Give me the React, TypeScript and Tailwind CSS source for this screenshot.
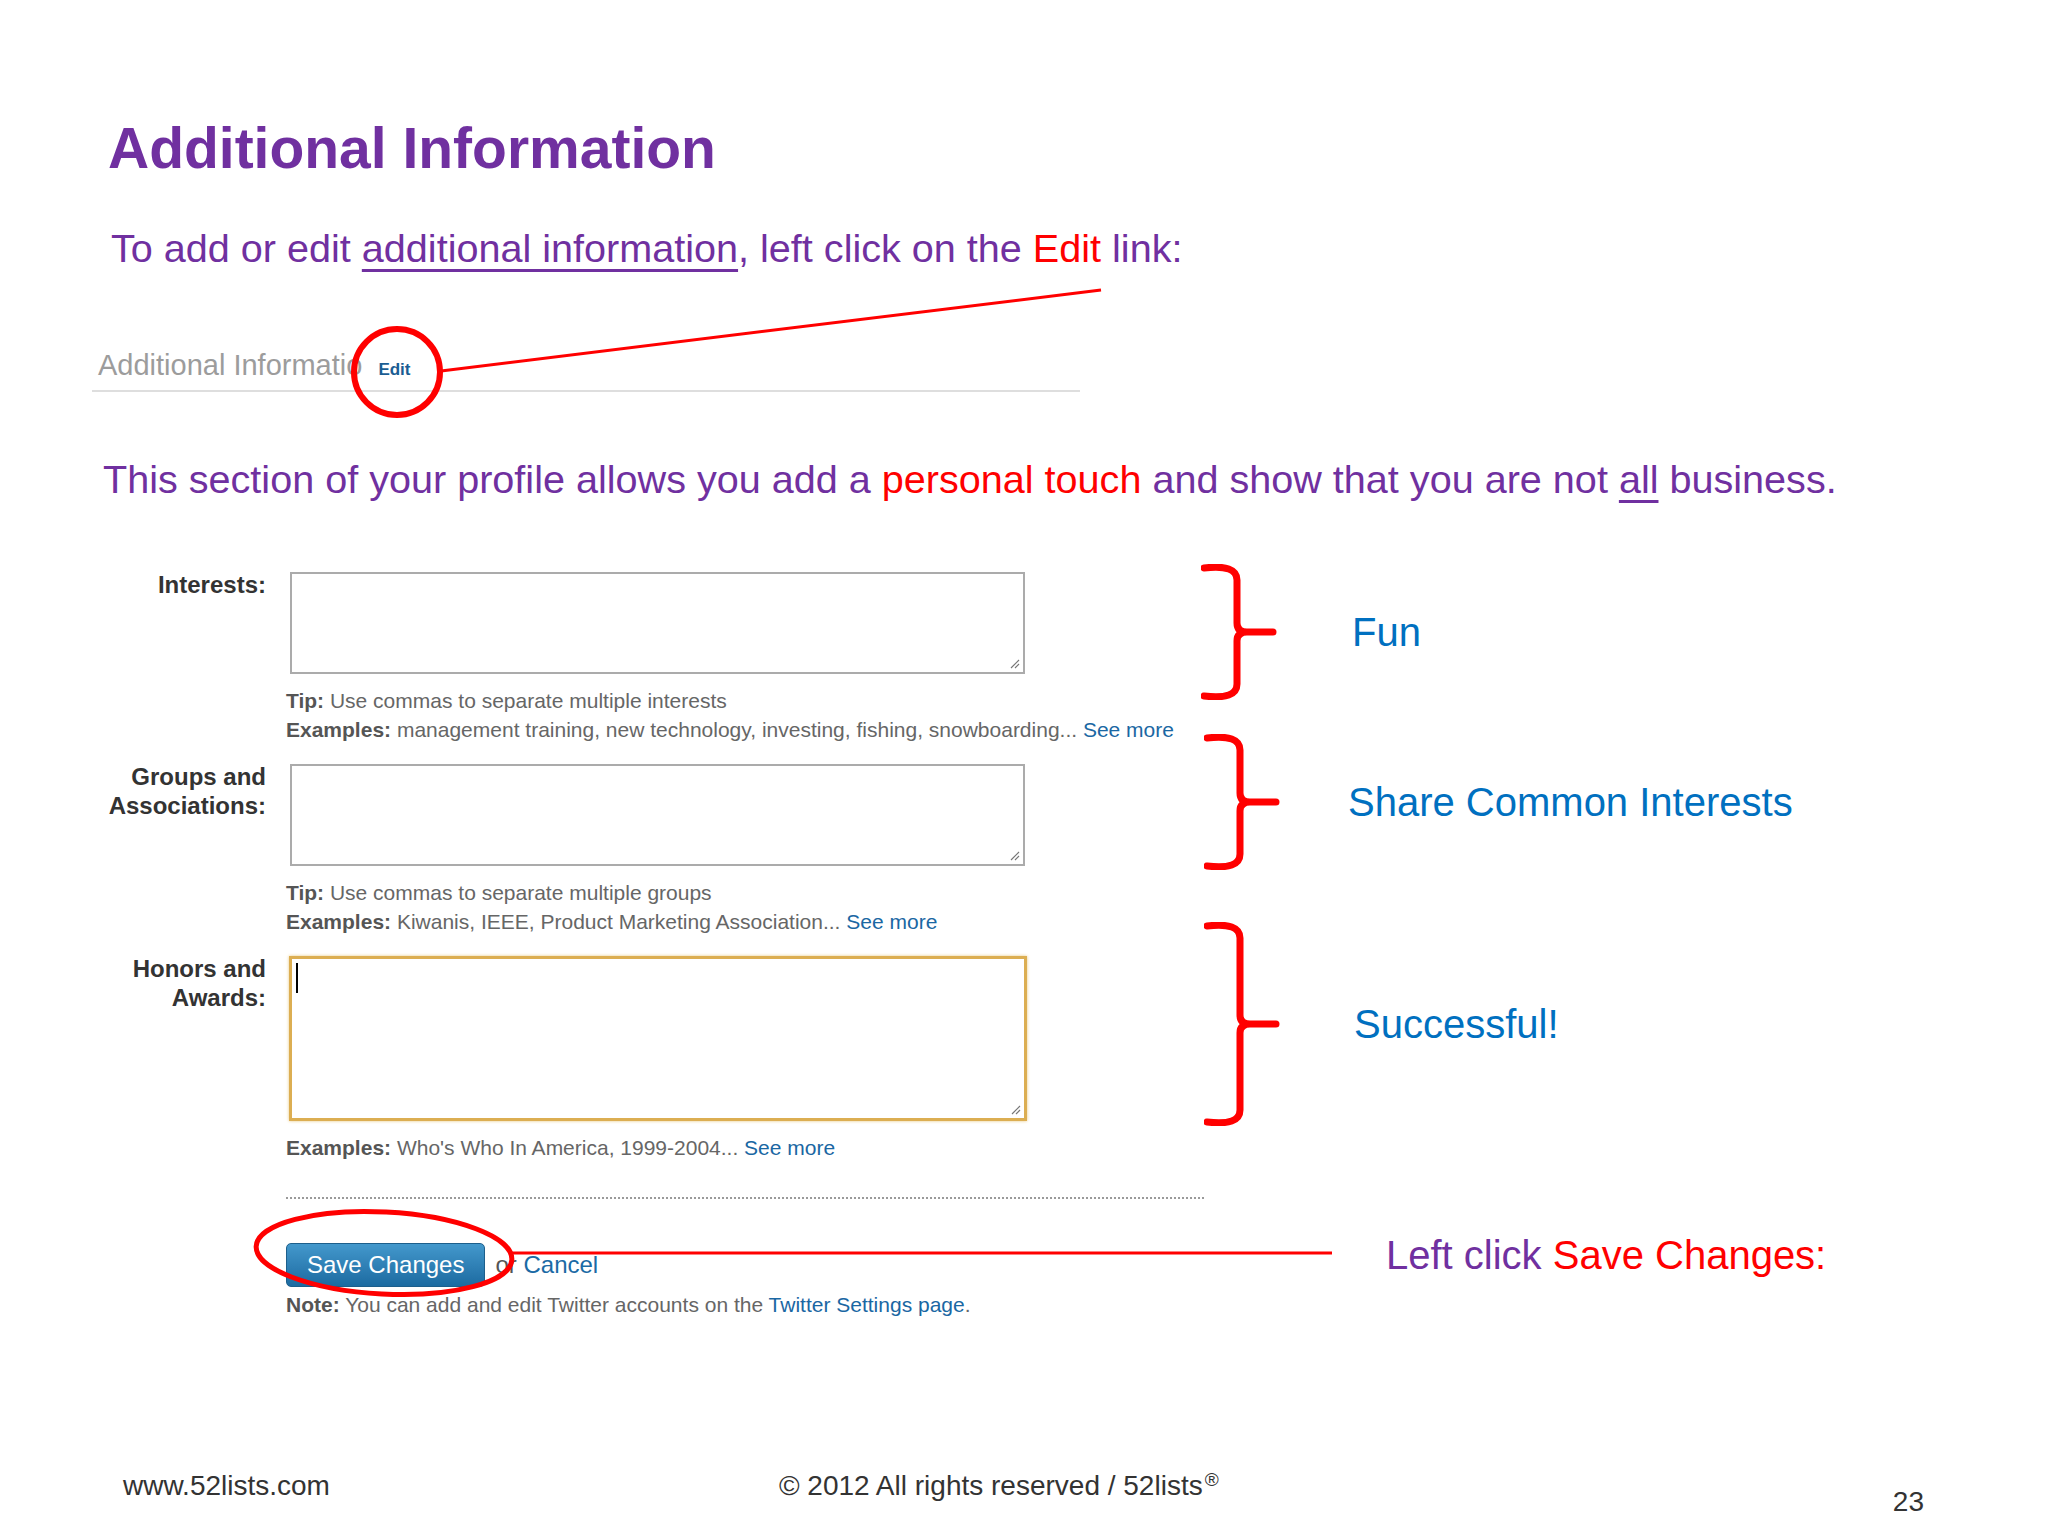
import React from 'react'

const font = { fontFamily: '"Liberation Sans", Arial, sans-serif' }

const Grip = () => (
  <svg className="absolute right-[3px] bottom-[3px]" width="11" height="11" viewBox="0 0 11 11">
    <path d="M10 2 L2 10 M10 6 L6 10" stroke="#777" strokeWidth="1.2" />
  </svg>
)

const Brace = ({ h }: { h: number }) => {
  const mid = h / 2
  return (
    <svg width="76" height={h} viewBox={`0 0 76 ${h}`} className="shrink-0">
      <path
        d={`M3 4 Q36 0 36 16 L36 ${mid - 9} Q36 ${mid} 46 ${mid} L72 ${mid} M46 ${mid} Q36 ${mid} 36 ${mid + 9} L36 ${h - 16} Q36 ${h} 3 ${h - 4}`}
        stroke="#ff0000"
        strokeWidth="7"
        fill="none"
        strokeLinecap="round"
        strokeLinejoin="round"
      />
    </svg>
  )
}

const Label = ({ lines }: { lines: string[] }) => (
  <div className="w-[266px] text-right text-[24px] leading-[29px] font-bold text-[#333]">
    {lines.map((l) => (
      <div key={l}>{l}</div>
    ))}
  </div>
)

const SeeMore = () => <span className="text-[#1a67a3]">See more</span>

const App = () => {
  return (
    <div className="relative w-[2048px] h-[1536px] bg-white flex flex-col overflow-hidden" style={font}>
      <h1 className="mt-[120px] ml-[108px] text-[57px] leading-[57px] font-bold text-[#7030a0]">
        Additional Information
      </h1>

      <p className="mt-[51px] ml-[111px] text-[39.6px] leading-[40px] text-[#7030a0]">
        To add or edit{' '}
        <span className="underline decoration-[3px] underline-offset-[7px]">additional information</span>, left click on
        the <span className="text-[#ff0000]">Edit</span> link:
      </p>

      <div className="mt-[83px] ml-[92px] w-[988px] pl-[6px] pb-[7px] border-b-2 border-[#dedede] flex items-baseline">
        <span className="text-[29px] leading-[29px] text-[#9c9c9c]">Additional Informatio</span>
        <span className="ml-[16px] text-[17px] font-bold text-[#1a5d93]">Edit</span>
      </div>

      <p className="mt-[67px] ml-[103px] text-[39.6px] leading-[40px] text-[#7030a0]">
        This section of your profile allows you add a <span className="text-[#ff0000]">personal touch</span> and show
        that you are not <span className="underline decoration-[3px] underline-offset-[7px]">all</span> business.
      </p>

      <div className="mt-[65px] flex">
        <div className="w-[1201px] pt-[6px] text-[21px] leading-[29px] text-[#666]">
          <div className="flex gap-[20px]">
            <Label lines={['Interests:']} />
            <div>
              <div className="relative mt-[2px] ml-[4px] w-[735px] h-[102px] border-2 border-[#ababab] bg-white">
                <Grip />
              </div>
              <div className="mt-[12px]">
                <div>
                  <b className="text-[#555]">Tip:</b> Use commas to separate multiple interests
                </div>
                <div>
                  <b className="text-[#555]">Examples:</b> management training, new technology, investing, fishing,
                  snowboarding... <SeeMore />
                </div>
              </div>
            </div>
          </div>

          <div className="mt-[18px] flex gap-[20px]">
            <Label lines={['Groups and', 'Associations:']} />
            <div>
              <div className="relative mt-[2px] ml-[4px] w-[735px] h-[102px] border-2 border-[#ababab] bg-white">
                <Grip />
              </div>
              <div className="mt-[12px]">
                <div>
                  <b className="text-[#555]">Tip:</b> Use commas to separate multiple groups
                </div>
                <div>
                  <b className="text-[#555]">Examples:</b> Kiwanis, IEEE, Product Marketing Association... <SeeMore />
                </div>
              </div>
            </div>
          </div>

          <div className="mt-[18px] flex gap-[20px]">
            <Label lines={['Honors and', 'Awards:']} />
            <div>
              <div className="relative mt-[2px] ml-[3px] w-[738px] h-[165px] border-[3px] border-[#dcae52] bg-white shadow-[0_0_3px_#e8c77f]">
                <div className="absolute left-[4px] top-[4px] w-[2px] h-[30px] bg-black" />
                <Grip />
              </div>
              <div className="mt-[12px]">
                <b className="text-[#555]">Examples:</b> Who's Who In America, 1999-2004... <SeeMore />
              </div>
            </div>
          </div>

          <div className="ml-[286px] mt-[35px] w-[918px] border-t-2 border-dotted border-[#9a9a9a]" />

          <div className="ml-[286px] mt-[44px] flex items-center">
            <button className="h-[44px] px-[20px] rounded-[5px] border border-[#1d5f8c] bg-gradient-to-b from-[#4398cc] to-[#1c6ba1] text-white text-[24px] leading-[24px]">
              Save Changes
            </button>
            <span className="ml-[10px] text-[24px] text-[#555]">
              or <span className="text-[#1b6aa5]">Cancel</span>
            </span>
          </div>

          <div className="ml-[286px] mt-[3px]">
            <b className="text-[#555]">Note:</b> You can add and edit Twitter accounts on the{' '}
            <span className="text-[#1a67a3]">Twitter Settings page</span>.
          </div>
        </div>

        <div className="flex flex-col text-[40px] leading-[40px] text-[#0070c0]">
          <div className="flex items-center">
            <Brace h={136} />
            <span className="ml-[75px]">Fun</span>
          </div>
          <div className="mt-[34px] ml-[3px] flex items-center">
            <Brace h={136} />
            <span className="ml-[68px]">Share Common Interests</span>
          </div>
          <div className="mt-[52px] ml-[3px] flex items-center">
            <Brace h={204} />
            <span className="ml-[74px]">Successful!</span>
          </div>
          <div className="mt-[109px] ml-[185px] whitespace-nowrap text-[#7030a0]">
            Left click <span className="text-[#ff0000]">Save Changes:</span>
          </div>
        </div>
      </div>

      <div className="mt-auto h-[64px] flex items-start text-[28px] leading-[28px] text-[#333]">
        <span className="ml-[123px]">www.52lists.com</span>
        <span className="ml-[449px]">
          © 2012 All rights reserved / 52lists<sup className="text-[19px] ml-[2px]">®</sup>
        </span>
        <span className="ml-auto mr-[124px] mt-[16px]">23</span>
      </div>

      <svg className="absolute inset-0 pointer-events-none" width="2048" height="1536" viewBox="0 0 2048 1536">
        <circle cx="397" cy="372" r="43" stroke="#ff0000" strokeWidth="6" fill="none" />
        <line x1="441" y1="371" x2="1101" y2="290" stroke="#ff0000" strokeWidth="3" />
        <ellipse
          cx="384"
          cy="1253"
          rx="128"
          ry="41"
          stroke="#ff0000"
          strokeWidth="5"
          fill="none"
          transform="rotate(3 384 1253)"
        />
        <line x1="512" y1="1253" x2="1332" y2="1253" stroke="#ff0000" strokeWidth="3" />
      </svg>
    </div>
  )
}

export default App
